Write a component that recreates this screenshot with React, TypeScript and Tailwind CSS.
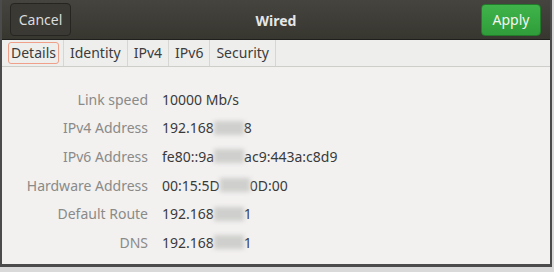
import React from 'react';

type Row = { label: string; parts: (string | { blur: number })[] };

const rows: Row[] = [
  { label: 'Link speed', parts: ['10000 Mb/s'] },
  { label: 'IPv4 Address', parts: ['192.168', { blur: 30 }, '8'] },
  { label: 'IPv6 Address', parts: ['fe80::9a', { blur: 30 }, 'ac9:443a:c8d9'] },
  { label: 'Hardware Address', parts: ['00:15:5D', { blur: 30 }, '0D:00'] },
  { label: 'Default Route', parts: ['192.168', { blur: 30 }, '1'] },
  { label: 'DNS', parts: ['192.168', { blur: 30 }, '1'] },
];

const tabs = ['Details', 'Identity', 'IPv4', 'IPv6', 'Security'];

export default function App() {
  return (
    <div
      className="w-[554px] h-[272px] bg-[#d9d9d9] overflow-hidden"
      style={{ fontFamily: '"Noto Sans", "Open Sans", sans-serif' }}
    >
      <div className="w-[552px] h-[267px] flex flex-col border-l-2 border-r-2 border-b-[3px] border-[#4b4b4b] bg-[#f2f1f0]">
        {/* Header bar */}
        <div className="h-[40px] flex items-center justify-between pl-[8px] pr-[9px] bg-gradient-to-b from-[#45443f] to-[#37362f] border-b border-[#1f1f1d]">
          <button className="h-[33px] w-[61px] rounded-[4px] border border-[#262522] bg-[#3a3934] text-[#dcdcdc] text-[14px] mt-[-1px]">
            Cancel
          </button>
          <div className="text-[14px] font-bold text-[#e6e6e6] mt-[1px]">Wired</div>
          <button className="h-[32px] w-[60px] rounded-[4px] border border-[#237a2b] bg-gradient-to-b from-[#3fb44a] to-[#2f9d3a] text-[#f4f4f4] text-[14px]">
            Apply
          </button>
        </div>

        {/* Tabs */}
        <div className="h-[27px] flex items-stretch bg-[#eeeeec] border-b border-[#cdcdc9]">
          {tabs.map((t, i) => (
            <div
              key={t}
              className={`flex items-center border-r border-[#d6d6d2] text-[14px] text-[#3c3c3c] ${
                i === 0 ? 'pl-[6px] pr-[4px]' : 'px-[5px]'
              }`}
            >
              <span
                className={
                  i === 0
                    ? 'px-[2px] rounded-[3px] border border-[#f0a088] leading-[20px]'
                    : 'px-[1px] leading-[20px]'
                }
              >
                {t}
              </span>
            </div>
          ))}
        </div>

        {/* Details */}
        <div className="flex flex-col pt-[22px] gap-[8px]">
          {rows.map((r) => (
            <div key={r.label} className="flex items-center h-[20.6px] text-[14px]">
              <div className="w-[146px] text-right text-[#8a8a88]">{r.label}</div>
              <div className="ml-[14px] flex items-center text-[#3a3a3a]">
                {r.parts.map((p, j) =>
                  typeof p === 'string' ? (
                    <span key={j}>{p}</span>
                  ) : (
                    <span
                      key={j}
                      className="inline-block h-[14px] bg-[#cfcfcd] blur-[2px]"
                      style={{ width: p.blur }}
                    />
                  )
                )}
              </div>
            </div>
          ))}
        </div>
      </div>
    </div>
  );
}
